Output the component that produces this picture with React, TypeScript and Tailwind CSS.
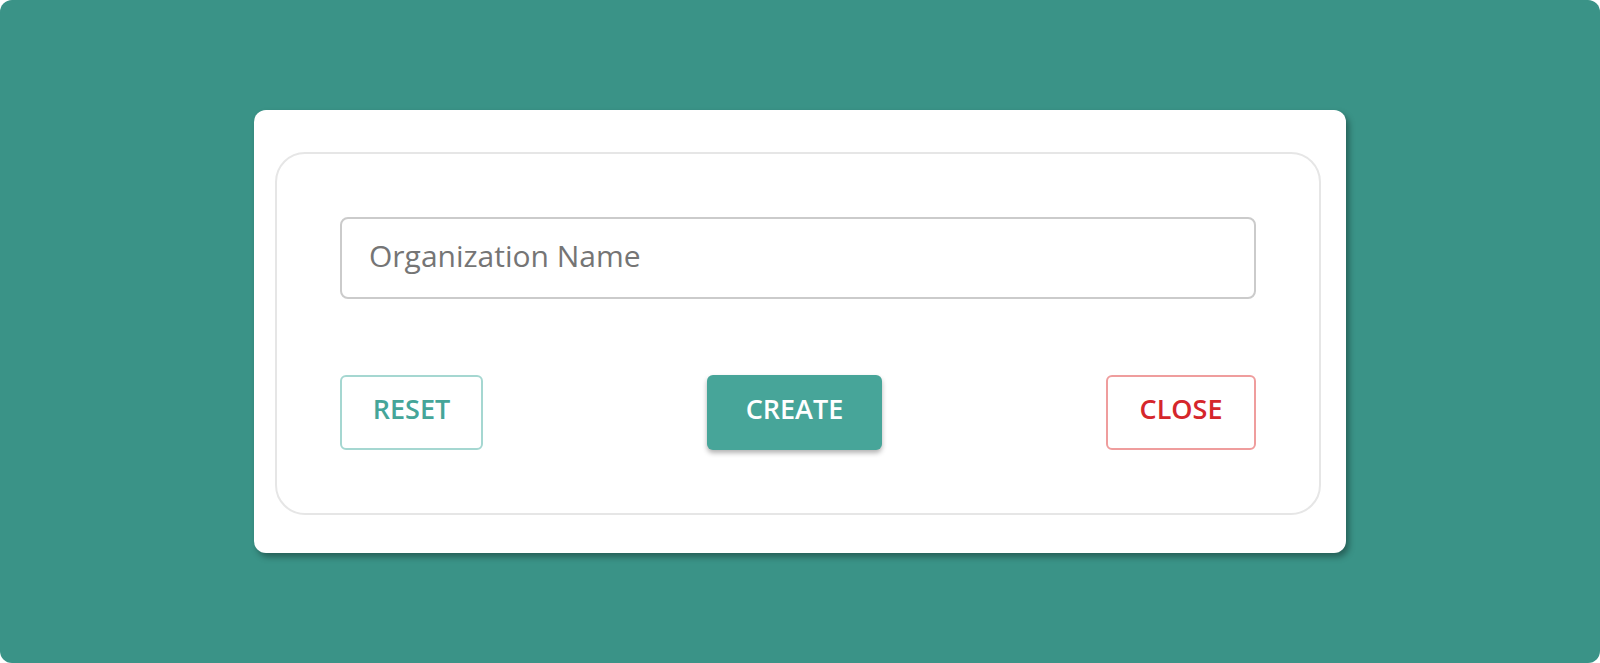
import { useState } from "react";

const font = { fontFamily: '"Open Sans", "Noto Sans", sans-serif' };

const App = () => {
  const [name, setName] = useState("");

  return (
    <div className="w-[1600px] h-[663px] bg-white" style={font}>
      <div className="w-full h-full rounded-xl bg-[#3a9387] flex items-center justify-center">
        <div className="w-[1092px] h-[443px] bg-white rounded-xl shadow-[3px_4px_6px_rgba(0,0,0,0.35)] pl-[21px] pr-[25px] pt-[42px] pb-[38px]">
          <form
            className="w-full h-full border-2 border-[#e6e6e6] rounded-[30px] p-[63px] flex flex-col"
            onSubmit={(e) => e.preventDefault()}
          >
            <input
              value={name}
              onChange={(e) => setName(e.target.value)}
              placeholder="Organization Name"
              className="w-full h-[83px] border-2 border-[#cbcbcb] rounded-lg pl-[27px] pr-[27px] pb-[6px] text-[30px] text-[#555] placeholder:text-[#757575] outline-none"
            />

            <div className="flex justify-between mt-[76px]">
              <button
                type="button"
                onClick={() => setName("")}
                className="w-[143px] h-[75px] pb-[6px] border-2 border-[#a5d7d1] rounded-md text-[27px] font-semibold text-[#45a599]"
              >
                RESET
              </button>
              <button
                type="submit"
                className="w-[175px] h-[75px] pb-[6px] bg-[#47a599] rounded-md text-[27px] font-semibold text-white shadow-[0_3px_5px_rgba(0,0,0,0.3)]"
              >
                CREATE
              </button>
              <button
                type="button"
                className="w-[150px] h-[75px] pb-[6px] border-2 border-[#ef9d9d] rounded-md text-[27px] font-semibold text-[#d5262b]"
              >
                CLOSE
              </button>
            </div>
          </form>
        </div>
      </div>
    </div>
  );
};

export default App;
